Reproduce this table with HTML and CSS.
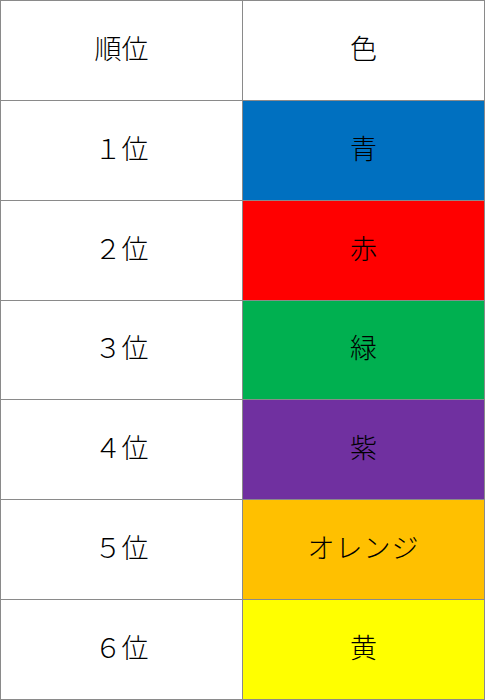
FILE: index.html
```html
<!DOCTYPE html>
<html lang="ja">
<head>
<meta charset="utf-8">
<link rel="stylesheet" href="styles.css">
</head>
<body>
<div class="table">
  <div class="cell">順位</div><div class="cell">色</div>
  <div class="cell">１位</div><div class="cell blue">青</div>
  <div class="cell">２位</div><div class="cell red">赤</div>
  <div class="cell">３位</div><div class="cell green">緑</div>
  <div class="cell">４位</div><div class="cell purple">紫</div>
  <div class="cell">５位</div><div class="cell orange">オレンジ</div>
  <div class="cell">６位</div><div class="cell yellow">黄</div>
</div>
</body>
</html>
```
FILE: styles.css
```css
html, body {
  margin: 0;
  padding: 0;
  background: #fff;
}
.table {
  box-sizing: border-box;
  width: 485px;
  height: 700px;
  display: grid;
  grid-template-columns: 242px 242px;
  grid-template-rows: repeat(7, 1fr);
  border-left: 1px solid #8a8a8a;
  border-top: 1px solid #8a8a8a;
  font-family: "Noto Sans CJK JP", sans-serif;
  font-weight: 300;
  font-size: 27px;
  color: #000;
}
.cell {
  display: flex;
  align-items: center;
  justify-content: center;
  padding-bottom: 6px;
  border-right: 1px solid #8a8a8a;
  border-bottom: 1px solid #8a8a8a;
}
.orange { letter-spacing: 1px; }
.blue { background: #0070c0; }
.red { background: #ff0000; }
.green { background: #00b050; }
.purple { background: #7030a0; }
.orange { background: #ffc000; }
.yellow { background: #ffff00; }
```
